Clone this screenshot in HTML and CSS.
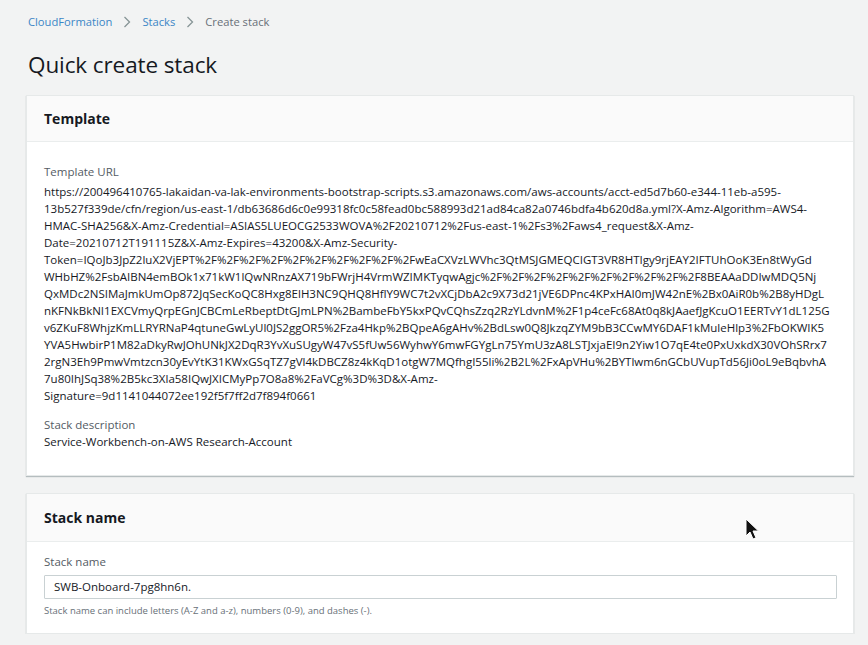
FILE: index.html
```html
<!DOCTYPE html>
<html>
<head>
<meta charset="utf-8">
<link rel="stylesheet" href="styles.css">
</head>
<body>
<div class="page">
  <nav class="crumbs">
    <a class="crumb-link">CloudFormation</a>
    <svg class="sep" width="8" height="12" viewBox="0 0 8 12"><path d="M1.5 1 L6.5 6 L1.5 11" fill="none" stroke="#879596" stroke-width="1.3"/></svg>
    <a class="crumb-link">Stacks</a>
    <svg class="sep" width="8" height="12" viewBox="0 0 8 12"><path d="M1.5 1 L6.5 6 L1.5 11" fill="none" stroke="#879596" stroke-width="1.3"/></svg>
    <span class="crumb-current">Create stack</span>
  </nav>
  <h1 class="title">Quick create stack</h1>

  <section class="panel panel-template">
    <header class="panel-head">Template</header>
    <div class="panel-body">
      <div class="label">Template URL</div>
      <div class="url">
        <span class="ln">https://200496410765-lakaidan-va-lak-environments-bootstrap-scripts.s3.amazonaws.com/aws-accounts/acct-ed5d7b60-e344-11eb-a595-</span>
        <span class="ln">13b527f339de/cfn/region/us-east-1/db63686d6c0e99318fc0c58fead0bc588993d21ad84ca82a0746bdfa4b620d8a.yml?X-Amz-Algorithm=AWS4-</span>
        <span class="ln">HMAC-SHA256&amp;X-Amz-Credential=ASIAS5LUEOCG2533WOVA%2F20210712%2Fus-east-1%2Fs3%2Faws4_request&amp;X-Amz-</span>
        <span class="ln">Date=20210712T191115Z&amp;X-Amz-Expires=43200&amp;X-Amz-Security-</span>
        <span class="ln">Token=IQoJb3JpZ2luX2VjEPT%2F%2F%2F%2F%2F%2F%2F%2F%2F%2FwEaCXVzLWVhc3QtMSJGMEQCIGT3VR8HTIgy9rjEAY2IFTUhOoK3En8tWyGd</span>
        <span class="ln">WHbHZ%2FsbAIBN4emBOk1x71kW1lQwNRnzAX719bFWrjH4VrmWZIMKTyqwAgjc%2F%2F%2F%2F%2F%2F%2F%2F%2F%2F8BEAAaDDIwMDQ5Nj</span>
        <span class="ln">QxMDc2NSIMaJmkUmOp872JqSecKoQC8Hxg8ElH3NC9QHQ8HflY9WC7t2vXCjDbA2c9X73d21jVE6DPnc4KPxHAI0mJW42nE%2Bx0AiR0b%2B8yHDgL</span>
        <span class="ln">nKFNkBkNI1EXCVmyQrpEGnJCBCmLeRbeptDtGJmLPN%2BambeFbY5kxPQvCQhsZzq2RzYLdvnM%2F1p4ceFc68At0q8kJAaefJgKcuO1EERTvY1dL125G</span>
        <span class="ln">v6ZKuF8WhjzKmLLRYRNaP4qtuneGwLyUl0JS2ggOR5%2Fza4Hkp%2BQpeA6gAHv%2BdLsw0Q8JkzqZYM9bB3CCwMY6DAF1kMuleHlp3%2FbOKWIK5</span>
        <span class="ln">YVA5HwbirP1M82aDkyRwJOhUNkJX2DqR3YvXuSUgyW47vS5fUw56WyhwY6mwFGYgLn75YmU3zA8LSTJxjaEI9n2Yiw1O7qE4te0PxUxkdX30VOhSRrx7</span>
        <span class="ln">2rgN3Eh9PmwVmtzcn30yEvYtK31KWxGSqTZ7gVl4kDBCZ8z4kKqD1otgW7MQfhgI55li%2B2L%2FxApVHu%2BYTlwm6nGCbUVupTd56Ji0oL9eBqbvhA</span>
        <span class="ln">7u80IhJSq38%2B5kc3Xla58IQwJXICMyPp7O8a8%2FaVCg%3D%3D&amp;X-Amz-</span>
        <span class="ln">Signature=9d1141044072ee192f5f7ff2d7f894f0661</span>
      </div>
      <div class="label label-gap">Stack description</div>
      <div class="value">Service-Workbench-on-AWS Research-Account</div>
    </div>
  </section>

  <section class="panel panel-name">
    <header class="panel-head">Stack name</header>
    <div class="panel-body">
      <div class="label">Stack name</div>
      <div class="input">SWB-Onboard-7pg8hn6n.</div>
      <div class="hint">Stack name can include letters (A-Z and a-z), numbers (0-9), and dashes (-).</div>
    </div>
  </section>
</div>
<svg class="cursor" width="16" height="24" viewBox="0 0 16 24"><path d="M1 1 L1 18 L5 14 L8 21 L11 19.8 L8 13 L13.5 13 Z" fill="#111" stroke="#fff" stroke-width="1"/></svg>
</body>
</html>
```
FILE: styles.css
```css
html, body {
  margin: 0;
  padding: 0;
  background: #f2f3f3;
  font-family: "Open Sans", "Noto Sans", sans-serif;
  color: #16191f;
}
.page {
  padding: 14px 14px 0 26px;
}
.crumbs {
  display: flex;
  align-items: center;
  gap: 11px;
  height: 16px;
  padding-left: 2px;
  font-size: 11.2px;
  line-height: 16px;
}
.crumb-link {
  color: #3b86c6;
}
.crumb-current {
  color: #687078;
}
.sep {
  display: block;
}
.title {
  margin: 20px 0 0 2px;
  font-size: 22.5px;
  line-height: 30px;
  font-weight: 400;
  color: #16191f;
  letter-spacing: -0.1px;
}
.panel {
  background: #fff;
  border: 1px solid #e6e9e9;
  box-shadow: 0 1px 1px rgba(0, 28, 36, 0.25);
}
.panel-template {
  margin-top: 15px;
}
.panel-name {
  margin-top: 17px;
}
.panel-head {
  background: #fafafa;
  border-bottom: 1px solid #eaeded;
  padding: 0 17px;
  font-weight: 700;
  font-size: 14px;
  color: #16191f;
}
.panel-template .panel-head {
  height: 45px;
  line-height: 45px;
}
.panel-name .panel-head {
  height: 47px;
  line-height: 47px;
}
.panel-body {
  padding: 0 17px;
}
.panel-template .panel-body {
  padding-top: 21px;
  padding-bottom: 25px;
}
.panel-name .panel-body {
  padding-top: 11px;
  padding-bottom: 15px;
}
.label {
  font-size: 11.5px;
  line-height: 17px;
  color: #545b64;
}
.label-gap {
  margin-top: 12px;
}
.url {
  margin-top: 3px;
  font-size: 11.5px;
  line-height: 17px;
  color: #16191f;
}
.ln {
  display: block;
  white-space: nowrap;
}
.value {
  font-size: 11.5px;
  line-height: 17px;
  color: #16191f;
}
.input {
  margin-top: 5px;
  height: 22px;
  border: 1px solid #c9d1d3;
  border-radius: 1px;
  padding: 0 9px;
  font-size: 11.5px;
  line-height: 22px;
  color: #16191f;
  background: #fff;
  width: calc(100% - 19px);
}
.hint {
  margin-top: 5px;
  font-size: 9.5px;
  line-height: 14px;
  color: #687078;
}
.cursor {
  position: absolute;
  left: 745px;
  top: 518px;
}
```
